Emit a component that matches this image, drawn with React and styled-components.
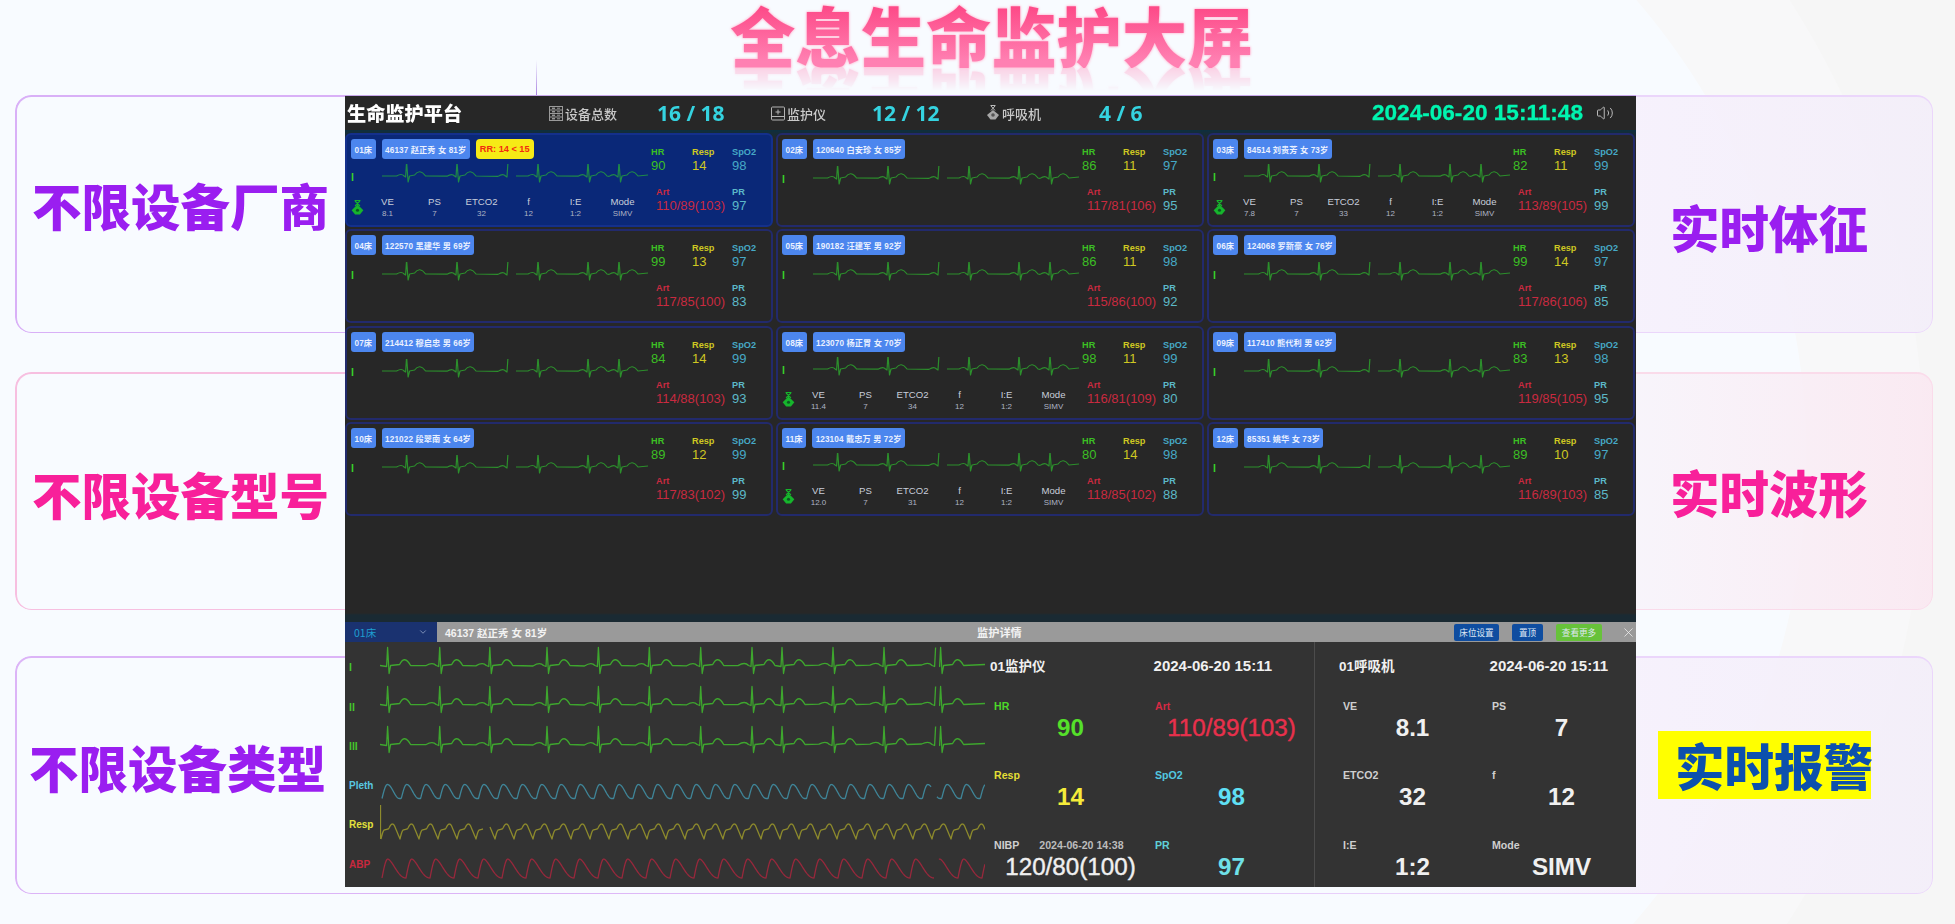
import React from "react";
import styled, { createGlobalStyle } from "styled-components";
import { Volume2, X, ChevronDown } from "lucide-react";

const SANS = `"Liberation Sans", "Noto Sans CJK SC", sans-serif`;
const CJK = `"Noto Sans CJK SC", "Liberation Sans", sans-serif`;

const Global = createGlobalStyle`
  html, body { margin: 0; padding: 0; overflow: hidden; }
  body { font-family: ${SANS}; }
`;

const Stage = styled.div`
  position: relative;
  width: 1955px;
  height: 924px;
  overflow: hidden;
  background:
    linear-gradient(90deg, #f8fbff 60%, transparent 60%),
    radial-gradient(circle 707px at 1100px 460px, #f8fbff 99.9%, transparent 100%),
    radial-gradient(circle 851px at 1074px 460px, #f8f8f9 99.9%, #f6f6f6 100%);
`;

const TitleBar = styled.header`
  height: 95px;
  display: flex;
  justify-content: center;
  padding-left: 28px;
  box-sizing: border-box;
  align-items: flex-start;
`;

const Title = styled.h1`
  margin: 0;
  font-family: ${CJK};
  font-weight: 900;
  font-size: 65px;
  line-height: 68px;
  letter-spacing: 0.3px;
  background: linear-gradient(180deg, #fd4a88 10%, #ff80b2 90%);
  -webkit-background-clip: text;
  background-clip: text;
  color: transparent;
  filter: blur(0.3px) drop-shadow(0 0 1px #ffb9d4) drop-shadow(0 0 1px #ffd3e3);
  -webkit-box-reflect: below -3px linear-gradient(transparent 62%, rgba(255, 255, 255, 0.38));
`;

const Connector = styled.div`
  position: absolute;
  left: 536px;
  top: 60px;
  width: 1px;
  height: 36px;
  background: linear-gradient(180deg, transparent, #a77fe0);
`;

const FeatureRows = styled.div`
  display: flex;
  flex-direction: column;
  padding: 0 22px 0 15px;
`;

const FeatureRow = styled.div`
  position: relative;
  box-sizing: border-box;
  height: 238px;
  margin-top: ${(p) => p.$gap}px;
  display: flex;
  align-items: center;
  justify-content: space-between;
  border-radius: 16px;
  background: linear-gradient(90deg, transparent 72%, ${(p) => p.$near} 85%, ${(p) => p.$tint} 100%);

  &::before {
    content: "";
    position: absolute;
    inset: 0;
    padding: 1.5px;
    border-radius: 16px;
    background: linear-gradient(90deg, ${(p) => p.$line} 25%, ${(p) => p.$faint} 80%);
    -webkit-mask: linear-gradient(#000 0 0) content-box, linear-gradient(#000 0 0);
    -webkit-mask-composite: xor;
    mask-composite: exclude;
  }
`;

const FeatureText = styled.span`
  font-family: ${CJK};
  font-weight: 900;
  font-size: 49.5px;
  line-height: 56px;
  white-space: nowrap;
  color: ${(p) => p.$color};
  margin: ${(p) => (p.$shift > 0 ? `${p.$shift * 2}px` : 0)} ${(p) => p.$right || 0}px ${(p) => (p.$shift < 0 ? `${-p.$shift * 2}px` : 0)} ${(p) => p.$left || 0}px;
`;

const HighlightText = styled.span`
  box-sizing: border-box;
  width: 213px;
  height: 68px;
  margin: 0 62px 20px 0;
  padding-left: 17px;
  background: #ffff00;
  font-family: ${CJK};
  font-weight: 900;
  font-size: 49.5px;
  line-height: 68px;
  white-space: nowrap;
  color: #0c50ad;
`;

const Monitor = styled.main`
  position: absolute;
  left: 345px;
  top: 96px;
  width: 1291px;
  height: 791px;
  display: flex;
  flex-direction: column;
  background: #272727;
  box-shadow: 0 -1px 0 #c7a6ea;
  filter: blur(0.45px);
  overflow: hidden;
`;

const TopBar = styled.div`
  height: 34px;
  flex: none;
  display: flex;
  align-items: center;
  color: #fff;
`;

const Brand = styled.div`
  width: 204px;
  padding-left: 2px;
  box-sizing: border-box;
  font-family: ${CJK};
  font-weight: 900;
  font-size: 19.2px;
  white-space: nowrap;
`;

const Stat = styled.div`
  display: flex;
  align-items: center;
  width: ${(p) => p.$width}px;
`;

const StatLabel = styled.span`
  display: flex;
  align-items: center;
  gap: 2px;
  width: ${(p) => p.$width}px;
  font-family: ${CJK};
  font-weight: 500;
  font-size: 13px;
  color: #c9c9c9;
  white-space: nowrap;
`;

const StatValue = styled.span`
  font-family: "Open Sans", sans-serif;
  font-weight: 700;
  font-size: 21px;
  color: #35d3e0;
  white-space: pre;
`;

const Clock = styled.div`
  margin-left: auto;
  font-family: "Liberation Sans", sans-serif;
  font-weight: 700;
  font-size: 22.6px;
  color: #00f5b0;
  white-space: nowrap;
  -webkit-text-stroke: 0.3px #00f5b0;
`;

const Sound = styled.div`
  display: flex;
  width: 53px;
  padding-left: 13px;
  box-sizing: border-box;
  color: #bdbdbd;
`;

const BedGrid = styled.section`
  flex: none;
  display: grid;
  grid-template-columns: repeat(3, 428px);
  grid-auto-rows: 94px;
  column-gap: 3px;
  row-gap: 2.33px;
  padding-top: 3px;
  background: linear-gradient(180deg, #0d2f40, #272727 10px);
`;

const BedCard = styled.article`
  box-sizing: border-box;
  display: flex;
  border: 2px solid ${(p) => (p.$active ? "#14308c" : "#222a6c")};
  border-radius: 6px;
  background: ${(p) => (p.$active ? "#0a2878" : "#272727")};
`;

const BedMain = styled.div`
  width: 302px;
  flex: none;
  padding: 4px 0 0 4px;
  box-sizing: border-box;
`;

const Tags = styled.div`
  display: flex;
  gap: 6px;
  height: 20px;
`;

const Tag = styled.span`
  display: flex;
  align-items: center;
  padding: 0 3.5px;
  border-radius: 3px;
  background: #4c86ee;
  color: #e9f0ff;
  font-family: ${SANS};
  font-weight: 700;
  font-size: 8.2px;
  letter-spacing: 0.1px;
  white-space: nowrap;
`;

const Alarm = styled.span`
  display: flex;
  align-items: center;
  padding: 0 4px;
  border-radius: 4px;
  background: #f6ea16;
  color: #f22a10;
  font-weight: 700;
  font-size: 9.2px;
  white-space: nowrap;
`;

const WaveRow = styled.div`
  display: flex;
  align-items: center;
  height: 26px;
  margin-top: ${(p) => (p.$vent ? 5 : 7)}px;
`;

const LeadLabel = styled.span`
  width: 31px;
  flex: none;
  color: #38d02a;
  font-weight: 700;
  font-size: 10.5px;
`;

const VentRow = styled.div`
  display: flex;
  align-items: center;
  margin-top: 6px;
`;

const VentBadge = styled.div`
  width: 13px;
  flex: none;
  display: flex;
`;

const VentGrid = styled.div`
  display: grid;
  grid-template-columns: repeat(6, 47px);
`;

const VentCell = styled.div`
  display: flex;
  flex-direction: column;
  align-items: center;
  color: #c9cedb;
`;

const VentLabel = styled.span`
  font-size: 9.6px;
  line-height: 12px;
`;

const VentValue = styled.span`
  font-size: 8px;
  line-height: 11px;
  color: #aeb4c4;
`;

const Vitals = styled.div`
  display: grid;
  grid-template-columns: 41px 40px 1fr;
  grid-template-rows: 28px 28px;
  row-gap: 12px;
  padding-top: 11px;
  padding-left: 2px;
`;

const Vital = styled.div`
  grid-column: ${(p) => p.$span || "auto"};
  padding-left: ${(p) => p.$pad || 0}px;
  color: ${(p) => p.$color};
`;

const VitalLabel = styled.div`
  font-weight: 700;
  font-size: 9.2px;
  line-height: 12px;
`;

const VitalValue = styled.div`
  font-size: 13px;
  line-height: 16px;
  white-space: nowrap;
`;

const GapBand = styled.div`
  flex: 1;
  background: linear-gradient(180deg, #272727 calc(100% - 9px), #1a2a33 calc(100% - 7px));
`;

const Detail = styled.section`
  flex: none;
  height: 265px;
  display: flex;
  flex-direction: column;
  background: #333;
`;

const DetailBar = styled.div`
  height: 20px;
  flex: none;
  display: flex;
  align-items: center;
  background: #9a9a9a;
  color: #f2f2f2;
`;

const BedSelect = styled.div`
  box-sizing: border-box;
  width: 92px;
  height: 20px;
  display: flex;
  align-items: center;
  justify-content: space-between;
  padding: 0 9px 0 9px;
  background: #1a3270;
  color: #1e9fd0;
  font-family: ${CJK};
  font-size: 10.5px;
`;

const DetailName = styled.span`
  width: 422px;
  padding-left: 8px;
  box-sizing: border-box;
  font-weight: 700;
  font-size: 10.5px;
  white-space: nowrap;
`;

const DetailTitle = styled.span`
  margin-left: 118px;
  font-family: ${CJK};
  font-weight: 700;
  font-size: 11.2px;
  white-space: nowrap;
`;

const BarActions = styled.div`
  margin-left: auto;
  display: flex;
  align-items: center;
  gap: 13px;
`;

const BarButton = styled.button`
  box-sizing: border-box;
  width: ${(p) => p.$width}px;
  height: 17px;
  padding: 0;
  border: 0;
  border-radius: 2px;
  background: ${(p) => p.$bg};
  color: #dfe8f4;
  font-family: ${CJK};
  font-size: 8.6px;
`;

const CloseBox = styled.div`
  display: flex;
  margin: 0 0 0 19px;
  width: 15px;
  color: #f0f0f0;
`;

const DetailBody = styled.div`
  flex: 1;
  display: flex;
  min-height: 0;
`;

const WaveColumn = styled.div`
  width: 640px;
  flex: none;
  padding-top: 4px;
  box-sizing: border-box;
`;

const TraceRow = styled.div`
  display: flex;
  align-items: center;
  height: 39.4px;
`;

const TraceLabel = styled.span`
  width: 35px;
  flex: none;
  padding: 3px 0 0 4px;
  box-sizing: border-box;
  font-weight: 700;
  font-size: ${(p) => p.$size}px;
  color: ${(p) => p.$color};
`;

const ReadoutPanel = styled.div`
  box-sizing: border-box;
  width: ${(p) => p.$width}px;
  flex: none;
  padding: 14px 0 0 ${(p) => p.$pad}px;
  border-left: ${(p) => (p.$divider ? "1px solid #4c4c4c" : "0")};
`;

const ReadoutHead = styled.div`
  display: flex;
  height: 18px;
  align-items: center;
  padding-left: ${(p) => p.$inset}px;
  margin-bottom: 26px;
  color: #f0f0f0;
  font-family: ${SANS};
  font-weight: 700;
  font-size: 13.5px;
  white-space: nowrap;
`;

const ReadoutStamp = styled.span`
  margin-left: auto;
  margin-right: ${(p) => p.$right}px;
  font-size: 15px;
`;

const ReadoutGrid = styled.div`
  display: grid;
  grid-template-columns: repeat(2, ${(p) => p.$col}px);
  grid-auto-rows: 69.4px;
`;

const Readout = styled.div`
  color: ${(p) => p.$color};
`;

const ReadoutLabel = styled.div`
  display: flex;
  height: 12px;
  align-items: center;
  padding-left: ${(p) => p.$inset}px;
  color: ${(p) => p.$color || "inherit"};
  font-weight: 700;
  font-size: 10.6px;
`;

const ReadoutLabelNote = styled.span`
  margin-left: 20px;
  color: #bcbcbc;
  font-size: 10.6px;
`;

const ReadoutValue = styled.div`
  margin-top: 2px;
  text-align: center;
  font-size: 24.2px;
  line-height: 28px;
  font-weight: ${(p) => (p.$thin ? 400 : 700)};
  -webkit-text-stroke: ${(p) => (p.$thin ? "0.4px currentColor" : "0")};
  white-space: nowrap;
`;

/* ---------- wave drawing ---------- */
const wob = (i) => Math.sin(i * 12.9898) * 0.5;

function ecgPath(x0, x1, beats, base, o) {
  let d = `M${x0} ${base}`;
  let cur = x0;
  beats.forEach((b, i) => {
    if (b - o.pre > cur) {
      d += ` L${b - o.pre} ${base + wob(i)}`;
      d += ` Q${b - o.pre / 2} ${base - o.p * 2} ${b - o.pre * 0.25} ${base}`;
    }
    d += ` L${b - 1} ${base + 1}`;
    d += ` L${b} ${base - o.r}`;
    if (b + 1.5 < x1) {
      d += ` L${b + 1.5} ${base + o.s} L${b + 3} ${base}`;
      d += ` L${b + o.t0 - 5} ${base - 1}`;
      d += ` Q${b + o.t0} ${base - o.t * 2} ${b + o.t0 + 6} ${base}`;
      cur = b + o.t0 + 6;
    } else {
      cur = b;
    }
  });
  if (cur < x1) d += ` L${x1} ${base - 1}`;
  return d;
}

function periodicPath(x0, x1, period, top, bottom, shape, gaps = []) {
  let d = "";
  let pen = false;
  for (let x = x0; x <= x1; x += 0.5) {
    if (gaps.some(([a, b]) => x > a && x < b)) {
      pen = false;
      continue;
    }
    const ph = ((x - x0) % period) / period;
    const y = bottom - (bottom - top) * shape(ph);
    d += `${pen ? "L" : "M"}${x.toFixed(2)} ${y.toFixed(2)} `;
    pen = true;
  }
  return d;
}

const plethShape = (p) =>
  p < 0.28
    ? Math.sin((p / 0.28) * (Math.PI / 2))
    : 0.5 + 0.5 * Math.cos(Math.min(((p - 0.28) / 0.62) * Math.PI, Math.PI));
const respShape = (p) => {
  if (p < 0.18) return 0.6 * Math.sin((p / 0.18) * (Math.PI / 2));
  if (p < 0.4) return 0.6 + 0.08 * ((p - 0.18) / 0.22);
  if (p < 0.7) return 0.68 + 0.32 * Math.sin(((p - 0.4) / 0.3) * (Math.PI * 0.75));
  return 0.91 * Math.pow(1 - (p - 0.7) / 0.3, 1.0);
};
const abpShape = (p) =>
  p < 0.24
    ? Math.sin((p / 0.24) * (Math.PI / 2))
    : 0.5 + 0.5 * Math.cos(Math.pow((p - 0.24) / 0.76, 0.8) * Math.PI);

const smallOpts = { pre: 10, p: 1.5, r: 14, s: 6, t: 4, t0: 13 };
const bigOpts = { pre: 14, p: 2, r: 18, s: 8, t: 5.5, t0: 17 };
const smallPath =
  ecgPath(0, 126, [24.6, 75, 126], 12, smallOpts) + " " + ecgPath(134, 266, [156, 206, 237], 12, smallOpts);
const bigBeats = [7.6, 59.7, 109.8, 167, 218.4, 269.3, 320.7, 372, 402, 453, 504, 555.6];
const bigPath = (base) =>
  ecgPath(0, 555.6, bigBeats, base, bigOpts) + " " + ecgPath(560, 605, [560.6], base, bigOpts);

const Trace = ({ d, color, width, height, sw = 1.3 }) => (
  <svg width={width} height={height} style={{ display: "block", flex: "none" }}>
    <path d={d} fill="none" stroke={color} strokeWidth={sw} strokeLinejoin="round" />
  </svg>
);

/* ---------- icons ---------- */
const VentIcon = ({ size = 13, color = "#16b52c" }) => (
  <svg width={size} height={size * 1.2} viewBox="0 0 13 16">
    <path d="M3.5 0.5 H9.5 M4 1 L9 6 M9 1 L4 6" stroke={color} strokeWidth="1.2" fill="none" />
    <path d="M6.5 4.5 L12.5 10.5 L9 15 H4 L0.5 10.5 Z" fill={color} />
    <circle cx="6.5" cy="10.5" r="1.6" fill="#0c5a22" />
  </svg>
);
const RackIcon = () => (
  <svg width="14" height="15" viewBox="0 0 14 15" fill="none" stroke="#9a9a9a" strokeWidth="1">
    <rect x="0.5" y="0.5" width="13" height="14" />
    <path d="M1 4 H13 M1 7.5 H13 M1 11 H13" />
    <path d="M3 2.2 H6 M3 5.8 H6 M3 9.2 H6 M3 12.8 H6" stroke="#c8c8c8" />
    <path d="M8 2.2 H11 M8 5.8 H11 M8 9.2 H11 M8 12.8 H11" />
  </svg>
);
const MonitorIcon = () => (
  <svg width="14" height="15" viewBox="0 0 14 15" fill="none" stroke="#b4b4b4" strokeWidth="1">
    <rect x="0.5" y="1" width="13" height="13" rx="1" />
    <path d="M1 10.5 H13 M7 3.5 V8.5 M4.5 6 H9.5" />
  </svg>
);
const BreatherIcon = () => (
  <svg width="14" height="16" viewBox="0 0 13 16">
    <path d="M4 0.5 H9 M4.5 1 L8.5 5.5 M8.5 1 L4.5 5.5" stroke="#bbb" strokeWidth="1" fill="none" />
    <path d="M6.5 5 L12.5 10 L9 14.5 H4 L0.5 10 Z" fill="#a8a8a8" />
    <circle cx="6.5" cy="10" r="1.8" fill="#555" />
  </svg>
);

/* ---------- data ---------- */
const VENT_KEYS = ["VE", "PS", "ETCO2", "f", "I:E", "Mode"];
const beds = [
  { bed: "01床", who: "46137 赵正秀 女 81岁", hr: 90, resp: 14, spo2: 98, art: "110/89(103)", pr: 97, vent: ["8.1", "7", "32", "12", "1:2", "SIMV"], alarm: "RR: 14 < 15", active: true },
  { bed: "02床", who: "120640 白安珍 女 85岁", hr: 86, resp: 11, spo2: 97, art: "117/81(106)", pr: 95 },
  { bed: "03床", who: "84514 刘贵芳 女 73岁", hr: 82, resp: 11, spo2: 99, art: "113/89(105)", pr: 99, vent: ["7.8", "7", "33", "12", "1:2", "SIMV"] },
  { bed: "04床", who: "122570 黑建华 男 69岁", hr: 99, resp: 13, spo2: 97, art: "117/85(100)", pr: 83 },
  { bed: "05床", who: "190182 汪建军 男 92岁", hr: 86, resp: 11, spo2: 98, art: "115/86(100)", pr: 92 },
  { bed: "06床", who: "124068 罗新豪 女 76岁", hr: 99, resp: 14, spo2: 97, art: "117/86(106)", pr: 85 },
  { bed: "07床", who: "214412 穆启忠 男 66岁", hr: 84, resp: 14, spo2: 99, art: "114/88(103)", pr: 93 },
  { bed: "08床", who: "123070 杨正胃 女 70岁", hr: 98, resp: 11, spo2: 99, art: "116/81(109)", pr: 80, vent: ["11.4", "7", "34", "12", "1:2", "SIMV"] },
  { bed: "09床", who: "117410 熊代利 男 62岁", hr: 83, resp: 13, spo2: 98, art: "119/85(105)", pr: 95 },
  { bed: "10床", who: "121022 段翠南 女 64岁", hr: 89, resp: 12, spo2: 99, art: "117/83(102)", pr: 99 },
  { bed: "11床", who: "123104 戴忠万 男 72岁", hr: 80, resp: 14, spo2: 98, art: "118/85(102)", pr: 88, vent: ["12.0", "7", "31", "12", "1:2", "SIMV"] },
  { bed: "12床", who: "85351 姚华 女 73岁", hr: 89, resp: 10, spo2: 97, art: "116/89(103)", pr: 85 },
];

const CARD_COLORS = { hr: "#3cbf24", resp: "#cfc822", spo2: "#46a9c6", art: "#c92a40", pr: "#5cb9c8" };

function Bed({ data }) {
  const { bed, who, alarm, vent, active, hr, resp, spo2, art, pr } = data;
  return (
    <BedCard $active={active}>
      <BedMain>
        <Tags>
          <Tag>{bed}</Tag>
          <Tag>{who}</Tag>
          {alarm && <Alarm>{alarm}</Alarm>}
        </Tags>
        <WaveRow $vent={!!vent}>
          <LeadLabel>I</LeadLabel>
          <Trace d={smallPath} color={active ? "#1f8a48" : "#2c8f2c"} width={266} height={26} sw={1.2} />
        </WaveRow>
        {vent && (
          <VentRow>
            <VentBadge>
              <VentIcon />
            </VentBadge>
            <VentGrid>
              {VENT_KEYS.map((k, i) => (
                <VentCell key={k}>
                  <VentLabel>{k}</VentLabel>
                  <VentValue>{vent[i]}</VentValue>
                </VentCell>
              ))}
            </VentGrid>
          </VentRow>
        )}
      </BedMain>
      <Vitals>
        <Vital $color={CARD_COLORS.hr}>
          <VitalLabel>HR</VitalLabel>
          <VitalValue>{hr}</VitalValue>
        </Vital>
        <Vital $color={CARD_COLORS.resp}>
          <VitalLabel>Resp</VitalLabel>
          <VitalValue>{resp}</VitalValue>
        </Vital>
        <Vital $color={CARD_COLORS.spo2}>
          <VitalLabel>SpO2</VitalLabel>
          <VitalValue>{spo2}</VitalValue>
        </Vital>
        <Vital $color={CARD_COLORS.art} $span="1 / span 2" $pad={5}>
          <VitalLabel>Art</VitalLabel>
          <VitalValue>{art}</VitalValue>
        </Vital>
        <Vital $color={CARD_COLORS.pr}>
          <VitalLabel>PR</VitalLabel>
          <VitalValue>{pr}</VitalValue>
        </Vital>
      </Vitals>
    </BedCard>
  );
}

const traces = [
  { label: "I", size: 10.5, color: "#45c52c", d: bigPath(19.5), stroke: "#3ea62e" },
  { label: "II", size: 10.5, color: "#45c52c", d: bigPath(19.5), stroke: "#3ea62e" },
  { label: "III", size: 10.5, color: "#45c52c", d: bigPath(19.5), stroke: "#3ea62e" },
  { label: "Pleth", size: 10, color: "#59c8e2", d: periodicPath(2, 605, 19.3, 20.5, 34.5, plethShape, [[551, 557]]), stroke: "#3f8598" },
  { label: "Resp", size: 10, color: "#e2e03c", d: "M0.5 1 V35 " + periodicPath(1, 605, 19, 20, 35, respShape, [[103, 110]]), stroke: "#8d8a2c" },
  { label: "ABP", size: 10, color: "#c9283e", d: periodicPath(2, 605, 24, 16, 35, abpShape, [[554, 559]]), stroke: "#98283c" },
];

export default function App() {
  return (
    <>
      <Global />
      <Stage>
        <TitleBar>
          <Title>全息生命监护大屏</Title>
        </TitleBar>
        <Connector />
        <FeatureRows>
          <FeatureRow $gap={0} $line="#d9b0f7" $faint="#ebd6fb" $near="rgba(246,240,252,.9)" $tint="rgba(243,238,249,.9)">
            <FeatureText $color="#9a1ef0" $left={17} $shift={-9}>不限设备厂商</FeatureText>
            <FeatureText $color="#9a1ef0" $right={65} $shift={13}>实时体征</FeatureText>
          </FeatureRow>
          <FeatureRow $gap={39} $line="#f7bfe0" $faint="#fadbea" $near="rgba(248,243,250,.85)" $tint="rgba(250,232,241,.9)">
            <FeatureText $color="#f8209a" $left={17} $shift={3}>不限设备型号</FeatureText>
            <FeatureText $color="#f8209a" $right={65} $shift={1}>实时波形</FeatureText>
          </FeatureRow>
          <FeatureRow $gap={46} $line="#dcb4f7" $faint="#ebd6fb" $near="rgba(246,240,252,.9)" $tint="rgba(243,238,249,.9)">
            <FeatureText $color="#9a1ef0" $left={14} $shift={-8}>不限设备类型</FeatureText>
            <HighlightText>实时报警</HighlightText>
          </FeatureRow>
        </FeatureRows>

        <Monitor>
          <TopBar>
            <Brand>生命监护平台</Brand>
            <Stat $width={222}>
              <StatLabel $width={108}>
                <RackIcon />
                设备总数
              </StatLabel>
              <StatValue>16 / 18</StatValue>
            </Stat>
            <Stat $width={215}>
              <StatLabel $width={101}>
                <MonitorIcon />
                监护仪
              </StatLabel>
              <StatValue>12 / 12</StatValue>
            </Stat>
            <Stat $width={200}>
              <StatLabel $width={113}>
                <BreatherIcon />
                呼吸机
              </StatLabel>
              <StatValue>4 / 6</StatValue>
            </Stat>
            <Clock>2024-06-20 15:11:48</Clock>
            <Sound>
              <Volume2 size={18} strokeWidth={1.3} />
            </Sound>
          </TopBar>

          <BedGrid>
            {beds.map((b) => (
              <Bed key={b.bed} data={b} />
            ))}
          </BedGrid>
          <GapBand />

          <Detail>
            <DetailBar>
              <BedSelect>
                01床
                <ChevronDown size={10} color="#8fa0c4" />
              </BedSelect>
              <DetailName>46137 赵正秀 女 81岁</DetailName>
              <DetailTitle>监护详情</DetailTitle>
              <BarActions>
                <BarButton $width={45} $bg="#0f4da0">床位设置</BarButton>
                <BarButton $width={31} $bg="#0f4da0">置顶</BarButton>
                <BarButton $width={46} $bg="#67c23a">查看更多</BarButton>
              </BarActions>
              <CloseBox>
                <X size={15} strokeWidth={1.2} />
              </CloseBox>
            </DetailBar>
            <DetailBody>
              <WaveColumn>
                {traces.map((t) => (
                  <TraceRow key={t.label}>
                    <TraceLabel $size={t.size} $color={t.color}>{t.label}</TraceLabel>
                    <Trace d={t.d} color={t.stroke} width={605} height={39.4} />
                  </TraceRow>
                ))}
              </WaveColumn>
              <ReadoutPanel $width={329} $pad={5}>
                <ReadoutHead $inset={0}>
                  01监护仪
                  <ReadoutStamp $right={42}>2024-06-20 15:11</ReadoutStamp>
                </ReadoutHead>
                <ReadoutGrid $col={161}>
                  <Readout $color="#55e02a">
                    <ReadoutLabel $inset={4} $color="#4cd929">HR</ReadoutLabel>
                    <ReadoutValue>90</ReadoutValue>
                  </Readout>
                  <Readout $color="#e8304c">
                    <ReadoutLabel $inset={4} $color="#d62a44">Art</ReadoutLabel>
                    <ReadoutValue $thin>110/89(103)</ReadoutValue>
                  </Readout>
                  <Readout $color="#f5ec3a">
                    <ReadoutLabel $inset={4} $color="#e4de35">Resp</ReadoutLabel>
                    <ReadoutValue>14</ReadoutValue>
                  </Readout>
                  <Readout $color="#5fe0f5">
                    <ReadoutLabel $inset={4} $color="#52c8e0">SpO2</ReadoutLabel>
                    <ReadoutValue>98</ReadoutValue>
                  </Readout>
                  <Readout $color="#f0f0f0">
                    <ReadoutLabel $inset={4} $color="#cfcfcf">
                      NIBP
                      <ReadoutLabelNote>2024-06-20 14:38</ReadoutLabelNote>
                    </ReadoutLabel>
                    <ReadoutValue $thin>120/80(100)</ReadoutValue>
                  </Readout>
                  <Readout $color="#6fe0e8">
                    <ReadoutLabel $inset={4} $color="#5fd0d8">PR</ReadoutLabel>
                    <ReadoutValue>97</ReadoutValue>
                  </Readout>
                </ReadoutGrid>
              </ReadoutPanel>
              <ReadoutPanel $width={322} $pad={23} $divider>
                <ReadoutHead $inset={1}>
                  01呼吸机
                  <ReadoutStamp $right={28}>2024-06-20 15:11</ReadoutStamp>
                </ReadoutHead>
                <ReadoutGrid $col={149}>
                  {VENT_KEYS.map((k, i) => (
                    <Readout key={k} $color="#f0f0f0">
                      <ReadoutLabel $inset={5} $color="#cfcfcf">{k}</ReadoutLabel>
                      <ReadoutValue>{beds[0].vent[i]}</ReadoutValue>
                    </Readout>
                  ))}
                </ReadoutGrid>
              </ReadoutPanel>
            </DetailBody>
          </Detail>
        </Monitor>
      </Stage>
    </>
  );
}
